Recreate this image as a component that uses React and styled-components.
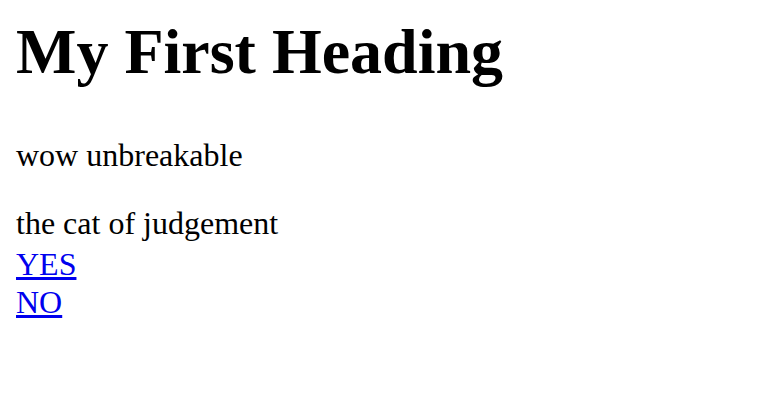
import React from 'react'
import styled, {createGlobalStyle} from 'styled-components'

const GlobalStyle = createGlobalStyle`
    html, body {
        margin: 0;
        background: #fff;
    }
    body {
        font-family: "Liberation Serif", "Times New Roman", serif;
        font-size: 32px;
        color: #000;
    }
`
const Page = styled.main({
    padding: "15px 16px 16px",
})
const Heading = styled.h1({
    fontSize: "64px",
    fontWeight: "bold",
    margin: "0 0 47px 0",
    lineHeight: "74px",
})
const Text = styled.p({
    margin: "0 0 30px 0",
    lineHeight: "38px",
})
const Choices = styled.div({
    display: "flex",
    flexDirection: "column",
    alignItems: "flex-start",
    lineHeight: "38px",
})
const Caption = styled.span({
    marginBottom: "3px",
})
const Choice = styled.a({
    color: "#0000ee",
    textDecoration: "underline",
})

function App() {
    return (
        <>
            <GlobalStyle />
            <Page>
                <Heading>My First Heading</Heading>
                <Text>wow unbreakable</Text>
                <Choices>
                    <Caption>the cat of judgement</Caption>
                    <Choice href={"#yes"}>YES</Choice>
                    <Choice href={"#no"}>NO</Choice>
                </Choices>
            </Page>
        </>
    )
}
export default App
